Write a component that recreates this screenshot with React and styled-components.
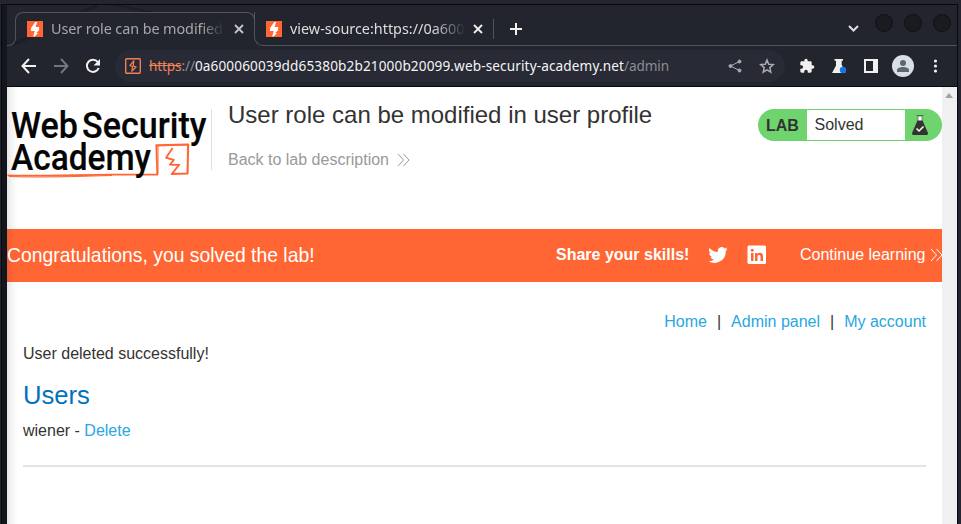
import React from "react";
import styled, { createGlobalStyle } from "styled-components";

const Global = createGlobalStyle`
  * { box-sizing: border-box; }
  html, body { margin: 0; padding: 0; overflow: hidden; }
  body { background: #232530; }
  svg { display: block; flex: none; }
`;

const Desktop = styled.div`
  width: 961px;
  height: 524px;
  padding: 4px 3px 0 2px;
  overflow: hidden;
  background: #242531;
`;
const BrowserWindow = styled.div`
  width: 956px;
  height: 520px;
  border: solid #08090d;
  border-width: 1px 1px 0 0;
  border-left: 5px solid #14161d;
  box-shadow: -1px 0 #08090d;
  background: #22252e;
`;
const TabStrip = styled.div`
  display: flex;
  height: 41px;
  background:
    linear-gradient(155deg, transparent 49%, #1a1c23 50%, #1d2028 54%, transparent 56%) 0 0 / 90px 40px no-repeat,
    linear-gradient(192deg, transparent 48%, #1b1d25 50%, transparent 58%) 85px 0 / 140px 18px no-repeat,
    #22252e;
`;
const StripEdge = styled.div`
  width: ${(p) => (p.$left ? "9px" : "auto")};
  flex: ${(p) => (p.$left ? "none" : "1")};
  height: ${(p) => (p.$left ? "12px" : "34px")};
  align-self: flex-end;
  border: solid #51545c;
  border-width: ${(p) => (p.$left ? "0 1px 1px 0" : "0 0 1px 1px")};
  border-radius: ${(p) => (p.$left ? "0 0 8px 0" : "0 0 0 9px")};
  display: flex;
  align-items: center;
  padding-left: ${(p) => (p.$left ? 0 : "11px")};
`;
const ActiveTab = styled.div`
  width: 240px;
  height: 26px;
  margin: 7px -1px 0 -1px;
  padding: 6px 10px 0 11px;
  display: flex;
  align-items: center;
  border: solid #51545c;
  border-width: 1px 1px 0 1px;
  border-radius: 8px 8px 0 0;
  background: #22252e;
`;
const TabTitle = styled.div`
  width: ${(p) => p.$width}px;
  margin-left: 8px;
  overflow: hidden;
  white-space: nowrap;
  font: 14.4px/24px "Noto Sans", sans-serif;
  letter-spacing: ${(p) => p.$spacing || 0}px;
  color: ${(p) => p.$color};
  mask-image: linear-gradient(90deg, #000 calc(100% - ${(p) => p.$fade}px), transparent);
`;
const TabClose = styled.div`
  margin-left: ${(p) => p.$gap}px;
  color: ${(p) => p.$color};
`;
const TabDivider = styled.div`
  width: 1px;
  height: 20px;
  margin: 0 16px 0 10px;
  background: #51545c;
`;
const StripControls = styled.div`
  display: flex;
  align-items: center;
  margin-left: auto;
  height: 100%;
`;
const WindowButtons = styled.div`
  display: flex;
  gap: 11px;
  margin: -12px 6px 0 16px;
`;
const WindowButton = styled.div`
  width: 18px;
  height: 18px;
  border-radius: 50%;
  border: 1px solid #101115;
  background: #191b20;
`;
const Toolbar = styled.div`
  display: flex;
  align-items: center;
  height: 41px;
  padding-left: 14px;
  border-bottom: 1px solid #08090d;
`;
const NavIcon = styled.div`
  width: 32px;
  color: ${(p) => (p.$dim ? "#74767b" : "#f0f0ee")};
`;
const AddressBar = styled.div`
  display: flex;
  align-items: center;
  width: 670px;
  height: 32px;
  margin-left: -2px;
  padding: 0 10px 0 10px;
  border-radius: 16px;
  background: #282a35;
  color: #aaabad;
`;
const Address = styled.div`
  flex: 1;
  margin-left: 8px;
  white-space: nowrap;
  font: 13.6px/24px "Noto Sans", sans-serif;
  color: #f4f4f4;
  letter-spacing: 0.12px;
`;
const Scheme = styled.span`
  color: #ee8259;
  letter-spacing: -0.12px;
  text-decoration: line-through;
`;
const Muted = styled.span`
  color: #8b8d92;
  letter-spacing: -0.12px;
`;
const AddressActions = styled.div`
  display: flex;
  gap: 16px;
`;
const Extensions = styled.div`
  display: flex;
  align-items: center;
  margin-left: 14px;
`;
const ExtensionIcon = styled.div`
  width: ${(p) => p.$width || 32}px;
`;
const Avatar = styled.div`
  width: 32px;
`;
const Viewport = styled.div`
  display: flex;
  height: 437px;
  background: #fff;
`;
const Page = styled.div`
  width: 935px;
  height: 437px;
  overflow: hidden;
  font: 16px/20px "Liberation Sans", Arial, sans-serif;
  color: #333332;
  background: linear-gradient(90deg, #e6e4e5 0, #f6f5f6 5px, #fff 11px);
`;
const Scrollbar = styled.div`
  width: 15px;
  padding: 6px 0 0 3px;
  background: #f0f0f0;
`;
const LabHeader = styled.header`
  display: flex;
  height: 142px;
`;
const LogoCell = styled.div`
  width: 205px;
  height: 61px;
  margin-top: 22px;
  border-right: 1px solid #e0e0e0;
`;
const TitleBlock = styled.div`
  flex: 1;
  padding: 13px 0 0 16px;
`;
const LabTitle = styled.h2`
  margin: 0;
  font-size: 24px;
  font-weight: 400;
  line-height: 30px;
`;
const BackLink = styled.div`
  display: flex;
  align-items: center;
  gap: 8px;
  margin-top: 20px;
  color: #999;
`;
const LabStatus = styled.div`
  display: flex;
  width: 184px;
  height: 32px;
  margin-top: 22px;
  padding: 1px 0;
  border-radius: 16px;
  background: #70d46e;
  line-height: 30px;
`;
const LabLabel = styled.b`
  width: 49px;
  padding-left: 8px;
  line-height: 31px;
`;
const LabState = styled.div`
  width: 98px;
  padding-left: 7.5px;
  background: #fff;
`;
const LabFlask = styled.div`
  padding: 4px 0 0 6px;
`;
const Banner = styled.section`
  display: flex;
  align-items: center;
  height: 53px;
  padding-bottom: 2px;
  color: #fff;
  background: linear-gradient(90deg, #e95d30 0, #fa6434 5px, #ff6633 11px);
  & > * { flex: none; }
`;
const Congrats = styled.div`
  width: 549px;
  font-size: 19.35px;
  white-space: nowrap;
`;
const Share = styled.b`
  width: 152px;
`;
const ShareIcon = styled.div`
  width: 39px;
  padding-top: 1px;
`;
const Continue = styled.div`
  display: flex;
  align-items: center;
  gap: 5px;
  margin-left: 14px;
  white-space: nowrap;
`;
const Content = styled.main`
  padding: 30px 16px 0;
`;
const Navigation = styled.nav`
  display: flex;
  justify-content: flex-end;
  gap: 10px;
`;
const Link = styled.a`
  color: #29a7df;
`;
const Message = styled.p`
  margin: 12px 0 0;
`;
const UsersTitle = styled.h1`
  margin: 15px 0 0;
  font-size: 25.6px;
  font-weight: 400;
  line-height: 32px;
  color: #0071bc;
`;
const UserRow = styled.div`
  margin-top: 10px;
`;
const Rule = styled.div`
  height: 2px;
  margin-top: 24px;
  background: #e4e4e4;
`;

const Close = () => (
  <svg width="10" height="10" viewBox="0 0 10 10" stroke="currentColor" strokeWidth="1.8">
    <path d="M1 1l8 8M9 1L1 9" />
  </svg>
);
const Favicon = () => (
  <svg width="16" height="16" viewBox="0 0 16 16">
    <path fill="#ff6633" d="M0 0h16v16H0z" />
    <path fill="#fff" d="M8.3 1h1.8L8.6 6h3.5v3.2L9.2 12H11l-3.3 3.4H6.2l1.5-5.3H4V7z" />
  </svg>
);
const Chevrons = ({ color, width = 13 }) => (
  <svg width={width} height="14" viewBox={`0 0 ${width} 14`} fill="none" stroke={color} strokeWidth="1">
    <path d="M1 1l5.5 6L1 13M6.500 1l5.500 6-5.500 6" />
  </svg>
);
const LogoWord = ({ x, y, width, children }) => (
  <text x={x} y={y} fill="#050505" stroke="#050505" strokeWidth=".2" fontFamily="Roboto, sans-serif" fontWeight="500" fontSize="37.5" textLength={width} lengthAdjust="spacingAndGlyphs">
    {children}
  </text>
);
const Logo = () => (
  <svg width="204" height="74" viewBox="0 0 204 74">
    <LogoWord x="4" y="28.7" width="67">Web</LogoWord>
    <LogoWord x="75" y="28.7" width="124.500">Security</LogoWord>
    <g fill="none" stroke="#ff6633" strokeLinejoin="round">
      <path strokeWidth="1.8" d="M.5 66.300c30 1.200 65-.3 105-.6l44.800-.2-1-29.400 32-.8-.6 29.200-16 .6 7.500-9.300-9.300-.2 4-4.700-7.800-2.200 6.500-9.600" />
      <path strokeWidth="1" d="M2 67.500c33 1.200 66 0 103-1M150 37l31-1M151 36.500v29M180.500 36l-.4 28.500-15.500-.3M158.700 49l7 1.800M163.800 55.800l8 .1" />
    </g>
    <LogoWord x="4" y="61" width="140">Academy</LogoWord>
  </svg>
);

export default function App() {
  return (
    <Desktop>
      <Global />
      <BrowserWindow>
        <TabStrip>
          <StripEdge $left />
          <ActiveTab>
            <Favicon />
            <TabTitle $width={173} $fade={22} $spacing={-0.08} $color="#a7a8aa">User role can be modified</TabTitle>
            <TabClose $gap={10} $color="#c6c6c7"><Close /></TabClose>
          </ActiveTab>
          <StripEdge>
            <Favicon />
            <TabTitle $width={176} $fade={34} $color="#dededf">view-source:https://0a600</TabTitle>
            <TabClose $gap={7} $color="#f0f0ee"><Close /></TabClose>
            <TabDivider />
            <svg width="12" height="12" viewBox="0 0 12 12" stroke="#f0f0ee" strokeWidth="2"><path d="M6 0v12M0 6h12" /></svg>
            <StripControls>
              <svg width="11" height="7" viewBox="0 0 11 7" fill="none" stroke="#dededf" strokeWidth="2"><path d="M1 1l4.500 4.500L10 1" /></svg>
              <WindowButtons><WindowButton /><WindowButton /><WindowButton /></WindowButtons>
            </StripControls>
          </StripEdge>
        </TabStrip>
        <Toolbar>
          <NavIcon><svg width="16" height="16" viewBox="0 0 16 16" fill="none" stroke="currentColor" strokeWidth="2"><path d="M15 8H2M8 1L1.500 8 8 15" /></svg></NavIcon>
          <NavIcon $dim><svg width="16" height="16" viewBox="0 0 16 16" fill="none" stroke="currentColor" strokeWidth="2"><path d="M1 8h13M8 1l6.500 7L8 15" /></svg></NavIcon>
          <NavIcon><svg width="16" height="16" viewBox="0 0 16 16"><path fill="none" stroke="currentColor" strokeWidth="2" d="M12.800 4A6.100 6.100 0 1 0 13.700 10" /><path fill="currentColor" d="M15 1v6.500H8.500z" /></svg></NavIcon>
          <AddressBar>
            <svg width="16" height="16" viewBox="0 0 16 16" fill="none" stroke="#f08052" strokeWidth="1.400"><rect x=".7" y=".7" width="14.600" height="14.600" rx="1" /><path strokeWidth="1.200" d="M8.700 3L5 7.500l2.500.9L7 13l4-4-2.700-1z" /></svg>
            <Address><Scheme>https</Scheme><Muted>://</Muted>0a600060039dd65380b2b21000b20099.web-security-academy.net<Muted>/admin</Muted></Address>
            <AddressActions>
              <svg width="16" height="16" viewBox="0 0 16 16" fill="currentColor" stroke="currentColor"><path fill="none" d="M12.500 3.500L3.500 8l9 4.500" /><circle cx="12.500" cy="3.500" r="1.500" /><circle cx="3.500" cy="8" r="1.500" /><circle cx="12.500" cy="12.500" r="1.500" /></svg>
              <svg width="16" height="16" viewBox="0 0 16 16" fill="none" stroke="currentColor" strokeWidth="1.500"><path d="M8 2l1.700 4.200 4.500.4-3.400 3 1 4.500L8 11.800l-3.800 2.300 1-4.500-3.400-3 4.500-.4z" /></svg>
            </AddressActions>
          </AddressBar>
          <Extensions>
            <ExtensionIcon><svg width="16" height="16" viewBox="0 0 24 24" fill="#f0f0ee"><path d="M20.500 11H19V7c0-1.100-.9-2-2-2h-4V3.500a2.500 2.500 0 0 0-5 0V5H4c-1.100 0-2 .9-2 2v3.800h1.500a2.700 2.700 0 0 1 0 5.400H2V20c0 1.100.9 2 2 2h3.800v-1.500a2.700 2.700 0 0 1 5.400 0V22H17c1.100 0 2-.9 2-2v-4h1.500a2.500 2.500 0 0 0 0-5z" /></svg></ExtensionIcon>
            <ExtensionIcon><svg width="16" height="16" viewBox="0 0 16 16"><path fill="#f0f0ee" d="M3.500 1H12v1.700h-1.300v4L14.500 15H1l4-7.500V2.700H3.500z" /><circle cx="12" cy="12" r="3.200" fill="#1a73e8" /></svg></ExtensionIcon>
            <ExtensionIcon $width={29}><svg width="16" height="16" viewBox="0 0 16 16"><path fill="#f0f0ee" d="M1 1h14v14H1z" /><path fill="#22252e" d="M3 3h7v10H3z" /></svg></ExtensionIcon>
            <Avatar><svg width="22" height="22" viewBox="0 0 22 22"><circle cx="11" cy="11" r="11" fill="#dadfe6" /><circle cx="11" cy="8" r="3" fill="#5b6775" /><path fill="#5b6775" d="M5 17v-2c0-4 12-4 12 0v2z" /></svg></Avatar>
            <svg width="22" height="16" viewBox="0 0 22 16" fill="#f0f0ee"><circle cx="11.500" cy="3" r="1.600" /><circle cx="11.500" cy="8" r="1.600" /><circle cx="11.500" cy="13" r="1.600" /></svg>
          </Extensions>
        </Toolbar>
        <Viewport>
          <Page>
            <LabHeader>
              <LogoCell><Logo /></LogoCell>
              <TitleBlock>
                <LabTitle>User role can be modified in user profile</LabTitle>
                <BackLink>Back to lab description <Chevrons color="#999" /></BackLink>
              </TitleBlock>
              <LabStatus>
                <LabLabel>LAB</LabLabel>
                <LabState>Solved</LabState>
                <LabFlask>
                  <svg width="18" height="22" viewBox="0 0 18 22"><path fill="#fff" stroke="#4c6b4c" strokeWidth=".7" d="M7 2h4v6H7z" /><path stroke="#4c6b4c" d="M5.500 1.500h7" /><path fill="#333332" d="M6.500 6.500h5L17 19q.3 2-1.500 2h-13Q.7 21 1 19z" /><path fill="none" stroke="#fff" strokeWidth="1.500" d="M5.500 14.500L8 17l4.500-4.500" /></svg>
                </LabFlask>
              </LabStatus>
            </LabHeader>
            <Banner>
              <Congrats>Congratulations, you solved the lab!</Congrats>
              <Share>Share your skills!</Share>
              <ShareIcon><svg width="20" height="20" viewBox="0 0 24 24" fill="#fff"><path d="M23.600 4.900a9 9 0 0 1-2.700.8 4.700 4.700 0 0 0 2.100-2.600 10 10 0 0 1-3 1.100 4.700 4.700 0 0 0-8.100 4.300A13.500 13.500 0 0 1 2 3.600a4.700 4.700 0 0 0 1.500 6.300 5 5 0 0 1-2.200-.6 4.700 4.700 0 0 0 3.800 4.700 5 5 0 0 1-2.100.1 4.700 4.700 0 0 0 4.400 3.300A9.600 9.600 0 0 1 .5 19.300a13.500 13.500 0 0 0 20.800-12c1-.7 1.700-1.500 2.300-2.400z" /></svg></ShareIcon>
              <ShareIcon><svg width="20" height="20" viewBox="0 0 20 20"><rect x=".5" y=".5" width="18.500" height="18.500" rx="1.500" fill="#fff" /><path fill="#ff6633" d="M4 8h2.500v8H4zM8 8h2.400v1.200C11.800 7 16 7.200 16 11v5h-2.500v-4.500c0-2.200-3-2-3 0V16H8z" /><circle cx="5.200" cy="5.200" r="1.500" fill="#ff6633" /></svg></ShareIcon>
              <Continue>Continue learning <Chevrons color="#fff" /></Continue>
            </Banner>
            <Content>
              <Navigation><Link>Home</Link><span>|</span><Link>Admin panel</Link><span>|</span><Link>My account</Link></Navigation>
              <Message>User deleted successfully!</Message>
              <UsersTitle>Users</UsersTitle>
              <UserRow>wiener - <Link>Delete</Link></UserRow>
              <Rule />
            </Content>
          </Page>
          <Scrollbar><svg width="8" height="5" viewBox="0 0 8 5"><path fill="#a3a3a3" d="M0 5l4-5 4 5z" /></svg></Scrollbar>
        </Viewport>
      </BrowserWindow>
    </Desktop>
  );
}
